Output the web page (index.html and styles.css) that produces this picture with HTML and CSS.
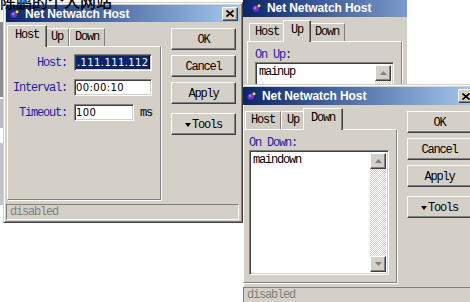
FILE: index.html
```html
<!DOCTYPE HTML>
<html>
<head>
    <meta charset="utf-8">
    <title>Net Netwatch Host</title>
    <link rel="stylesheet" href="styles.css">
</head>
<body>

<div class="edge"></div>

<!-- window 1: Host tab -->
<div class="win win-host">
    <div class="title">
        <svg class="logo" width="9" height="8" viewBox="0 0 9 8"><circle cx="3.8" cy="4.6" r="3.2" fill="#6a34c0"/><circle cx="3.2" cy="4" r="1.2" fill="#c070ff"/><circle cx="7" cy="1.8" r="1.5" fill="#ffe000"/></svg>
        <span class="caption">Net Netwatch Host</span>
        <span class="close"><svg width="8" height="7" viewBox="0 0 8 7"><path d="M0.5 0.5 L7.5 6.5 M7.5 0.5 L0.5 6.5" stroke="#000" stroke-width="1.7"/></svg></span>
    </div>
    <div class="main">
        <div class="tabbox">
            <div class="tabs">
                <span class="tab active">Host</span>
                <span class="tab">Up</span>
                <span class="tab">Down</span>
            </div>
            <div class="panel">
                <div class="row">
                    <span class="label">Host:</span>
                    <span class="entry"><span class="sel">.111.111.112</span></span>
                </div>
                <div class="row">
                    <span class="label">Interval:</span>
                    <span class="entry">00:00:10</span>
                </div>
                <div class="row">
                    <span class="label">Timeout:</span>
                    <span class="entry short">100</span>
                    <span class="unit">ms</span>
                </div>
            </div>
        </div>
        <div class="buttons">
            <span class="btn">OK</span>
            <span class="btn">Cancel</span>
            <span class="btn">Apply</span>
            <span class="btn tools"><svg width="6" height="4" viewBox="0 0 6 4"><polygon points="0,0 6,0 3,4" fill="#000"/></svg>Tools</span>
        </div>
    </div>
    <div class="status">disabled</div>
</div>

<!-- window 2: Up tab (cropped) -->
<div class="win win-up">
    <div class="title">
        <svg class="logo" width="9" height="8" viewBox="0 0 9 8"><circle cx="3.8" cy="4.6" r="3.2" fill="#6a34c0"/><circle cx="3.2" cy="4" r="1.2" fill="#c070ff"/><circle cx="7" cy="1.8" r="1.5" fill="#ffe000"/></svg>
        <span class="caption">Net Netwatch Host</span>
    </div>
    <div class="main">
        <div class="tabbox">
            <div class="tabs">
                <span class="tab">Host</span>
                <span class="tab active">Up</span>
                <span class="tab">Down</span>
            </div>
            <div class="panel">
                <div class="label-top">On Up:</div>
                <div class="memo">
                    <div class="memo-text">mainup</div>
                    <div class="scroll">
                        <span class="arrow"><svg width="7" height="5" viewBox="0 0 7 5"><polygon points="3.5,0 7,4 0,4" fill="#808080"/></svg></span>
                        <span class="arrow"><svg width="7" height="5" viewBox="0 0 7 5"><polygon points="0,0 7,0 3.5,4" fill="#808080"/></svg></span>
                    </div>
                </div>
            </div>
        </div>
    </div>
</div>

<!-- window 3: Down tab -->
<div class="win win-down">
    <div class="title">
        <svg class="logo" width="9" height="8" viewBox="0 0 9 8"><circle cx="3.8" cy="4.6" r="3.2" fill="#6a34c0"/><circle cx="3.2" cy="4" r="1.2" fill="#c070ff"/><circle cx="7" cy="1.8" r="1.5" fill="#ffe000"/></svg>
        <span class="caption">Net Netwatch Host</span>
        <span class="close"><svg width="8" height="7" viewBox="0 0 8 7"><path d="M0.5 0.5 L7.5 6.5 M7.5 0.5 L0.5 6.5" stroke="#000" stroke-width="1.7"/></svg></span>
    </div>
    <div class="main">
        <div class="tabbox">
            <div class="tabs">
                <span class="tab">Host</span>
                <span class="tab">Up</span>
                <span class="tab active">Down</span>
            </div>
            <div class="panel">
                <div class="label-top">On Down:</div>
                <div class="memo">
                    <div class="memo-text">maindown</div>
                    <div class="scroll">
                        <span class="arrow"><svg width="7" height="5" viewBox="0 0 7 5"><polygon points="3.5,0 7,4 0,4" fill="#808080"/></svg></span>
                        <span class="arrow"><svg width="7" height="5" viewBox="0 0 7 5"><polygon points="0,0 7,0 3.5,4" fill="#808080"/></svg></span>
                    </div>
                </div>
            </div>
        </div>
        <div class="buttons">
            <span class="btn">OK</span>
            <span class="btn">Cancel</span>
            <span class="btn">Apply</span>
            <span class="btn tools"><svg width="6" height="4" viewBox="0 0 6 4"><polygon points="0,0 6,0 3,4" fill="#000"/></svg>Tools</span>
        </div>
    </div>
    <div class="status">disabled</div>
</div>

<div class="watermark">陈鹏的个人网站</div>

</body>
</html>
```

FILE: styles.css
```css
* {
    box-sizing: border-box;
}

body {
    margin: 0;
    width: 470px;
    height: 302px;
    position: relative;
    overflow: hidden;
    background: #fff;
    font: 12px "Liberation Mono", monospace;
    letter-spacing: -1.2px;
    color: #000;
}

/* strip of some window further behind */
.edge {
    position: absolute;
    left: 0;
    top: 0;
    width: 3px;
    height: 223px;
    background: linear-gradient(to bottom, #fff 0 22px, #8c8c8c 22px 97px, #fff 97px 99px,
        #bdbdbd 99px 128px, #fff 128px 143px, #c4c4c4 143px 205px, #fff 205px);
}

.win {
    position: absolute;
    background: #d4d0c8;
    border: 1px solid;
    border-color: #d4d0c8 #404040 #404040 #d4d0c8;
    box-shadow: inset 1px 1px #fff, inset -1px -1px #808080;
    padding: 2px;
}
.win-host {
    left: 3px;
    top: 2px;
    width: 240px;
    height: 221px;
}
.win-up {
    left: 243px;
    top: -4px;
    width: 164px;
    height: 92px;
    border-left: 0;
    border-right: 0;
    padding-left: 0;
    padding-right: 0;
    box-shadow: none;
}
.win-down {
    left: 243px;
    top: 84px;
    width: 236px;
    height: 230px;
    border-left: 0;
    padding-left: 0;
}

.title {
    height: 18px;
    display: flex;
    align-items: center;
    padding: 0 2px 0 4px;
    background: linear-gradient(to right, #0a246a, #a6caf0);
    color: #fff;
    font: bold 12px "Liberation Sans", sans-serif;
    letter-spacing: -0.1px;
    white-space: nowrap;
}
.win-host .title {
    height: 17px;
}
.win-up .title {
    padding-left: 9px;
    background: linear-gradient(to right, #0a246a, #a6caf0 140%);
}
.logo {
    margin-right: 6px;
    flex: none;
}
.close {
    margin-left: auto;
    width: 16px;
    height: 14px;
    display: flex;
    align-items: center;
    justify-content: center;
    background: #d4d0c8;
    border: 1px solid;
    border-color: #fff #404040 #404040 #fff;
    box-shadow: inset -1px -1px #808080;
}

.main {
    display: flex;
    align-items: flex-start;
}
.tabbox {
    width: 154px;
    flex: none;
}
.win-host .tabbox {
    margin-left: 1px;
}
.win-up .tabbox {
    margin-left: 4px;
    width: 155px;
}

.tabs {
    height: 24px;
    display: flex;
    align-items: flex-end;
    padding-left: 2px;
}
.tab {
    height: 18px;
    line-height: 17px;
    padding: 0 5px;
    border: 1px solid;
    border-bottom: 0;
    border-color: #fff #808080 transparent #fff;
    background: #d0ccc4;
}
.tab.active {
    position: relative;
    z-index: 1;
    height: 22px;
    line-height: 19px;
    margin: 0 -2px -1px;
    padding: 0 7px;
    background: #d4d0c8;
    border-right-color: #404040;
    box-shadow: inset -1px 0 #808080;
}

.panel {
    height: 154px;
    border: 1px solid;
    border-color: #fff #808080 #808080 #fff;
    box-shadow: 1px 1px #fff;
    padding-top: 7px;
}

.row {
    display: flex;
    align-items: center;
    height: 17px;
    margin-bottom: 8px;
}
.label {
    width: 59px;
    margin-right: 7px;
    text-align: right;
    color: #1e1ea0;
}
.entry {
    width: 78px;
    height: 17px;
    display: flex;
    align-items: center;
    padding-left: 1px;
    overflow: hidden;
    white-space: nowrap;
    background: #fff;
    border: 1px solid;
    border-color: #808080 #fff #fff #808080;
    box-shadow: inset 1px 1px #404040, inset -1px -1px #d4d0c8;
    font: 10px "DejaVu Sans", sans-serif;
    letter-spacing: 0.4px;
}
.entry.short {
    width: 60px;
}
.sel {
    height: 13px;
    line-height: 13px;
    padding-left: 1px;
    background: #0a246a;
    color: #fff;
    border-right: 1px solid #000;
}
.unit {
    margin-left: 6px;
}

.label-top {
    height: 13px;
    line-height: 13px;
    color: #1e1ea0;
}
.win-up .panel {
    padding-left: 7px;
}
.win-down .panel {
    padding-left: 5px;
}

.memo {
    display: flex;
    width: 140px;
    height: 125px;
    padding: 2px;
    background: #fff;
    border: 1px solid;
    border-color: #808080 #fff #fff #808080;
    box-shadow: inset 1px 1px #404040, inset -1px -1px #d4d0c8;
}
.win-up .memo {
    width: 139px;
}
.memo-text {
    flex: 1;
    padding: 1px 0 0 1px;
    line-height: 13px;
}
.scroll {
    width: 16px;
    display: flex;
    flex-direction: column;
    justify-content: space-between;
    background: repeating-conic-gradient(#fff 0 25%, #d4d0c8 0 50%) 0 0 / 2px 2px;
}
.arrow {
    width: 16px;
    height: 16px;
    display: flex;
    align-items: center;
    justify-content: center;
    background: #d4d0c8;
    border: 1px solid;
    border-color: #fff #404040 #404040 #fff;
    box-shadow: inset -1px -1px #808080;
}

.buttons {
    width: 65px;
    margin: 6px 0 0 10px;
    display: flex;
    flex-direction: column;
    gap: 5px;
}
.btn {
    height: 22px;
    display: flex;
    align-items: center;
    justify-content: center;
    padding-top: 1px;
    background: #d4d0c8;
    border: 1px solid;
    border-color: #fff #404040 #404040 #fff;
    box-shadow: inset -1px -1px #808080;
}
.tools {
    margin-top: 4px;
}
.tools svg {
    margin-right: 1px;
}

.status {
    height: 16px;
    margin: 4px 1px 0 0;
    padding-left: 3px;
    line-height: 14px;
    color: #808080;
    border: 1px solid;
    border-color: #808080 #fff #fff #808080;
}

.watermark {
    position: absolute;
    left: 0;
    top: -7px;
    font: 500 16px/16px "Noto Sans CJK SC", sans-serif;
    letter-spacing: 0;
    color: #000;
    white-space: nowrap;
}
```
